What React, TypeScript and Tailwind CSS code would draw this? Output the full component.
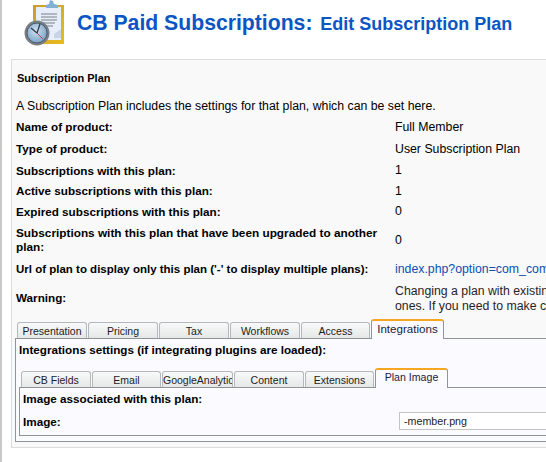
import React from 'react';

const rows: { label: React.ReactNode; value?: React.ReactNode; height: string; labelSize?: string }[] = [
  { label: 'Name of product:', value: 'Full Member', height: 'h-[22px]' },
  { label: 'Type of product:', value: 'User Subscription Plan', height: 'h-[22px]' },
  { label: 'Subscriptions with this plan:', value: '1', height: 'h-[21px]' },
  { label: 'Active subscriptions with this plan:', value: '1', height: 'h-[20px]' },
  { label: 'Expired subscriptions with this plan:', value: '0', height: 'h-[21px]' },
  {
    label: (
      <>
        Subscriptions with this plan that have been upgraded to another
        <br />
        plan:
      </>
    ),
    value: '0',
    height: 'h-[36px]',
    labelSize: 'text-[11.8px]',
  },
  {
    label: "Url of plan to display only this plan ('-' to display multiple plans):",
    value: <span className="text-[#0b4fb5]">index.php?option=com_comprofiler&amp;task=pluginclass</span>,
    height: 'h-[22px]',
    labelSize: 'text-[11.5px]',
  },
];

const mainTabs = [
  { name: 'Presentation', width: 'w-[70px]' },
  { name: 'Pricing', width: 'w-[70px]' },
  { name: 'Tax', width: 'w-[70px]' },
  { name: 'Workflows', width: 'w-[70px]' },
  { name: 'Access', width: 'w-[69px]' },
];

const subTabs = [
  { name: 'CB Fields', width: 'w-[70px]' },
  { name: 'Email', width: 'w-[69px]' },
  { name: 'GoogleAnalytics', width: 'w-[71px]' },
  { name: 'Content', width: 'w-[70px]' },
  { name: 'Extensions', width: 'w-[69px]' },
];

const Tab = ({ name, width }: { name: string; width: string }) => (
  <div
    className={`${width} h-4 shrink-0 overflow-hidden whitespace-nowrap rounded-t-[3px] border border-b-0 border-[#b4b8bc] bg-gradient-to-b from-[#f8f9f9] to-[#e6e8e8] text-center text-[10.5px] leading-[16px] text-[#222]`}
  >
    {name}
  </div>
);

const ActiveTab = ({ name, size }: { name: string; size: string }) => (
  <div
    className={`${size} relative z-10 -mb-px h-[20px] w-[73px] shrink-0 whitespace-nowrap rounded-t-[3px] border-x border-t-2 border-x-[#8f9498] border-t-[#f5a623] bg-[#fafaff] text-center leading-[15px] text-[#1a1a3a]`}
  >
    {name}
  </div>
);

const ClipboardClock = () => (
  <svg width="48" height="46" viewBox="0 0 48 46" className="shrink-0">
    <defs>
      <linearGradient id="board" x1="0" y1="0" x2="1" y2="1">
        <stop offset="0" stopColor="#c99a3a" />
        <stop offset="1" stopColor="#e8bc1e" />
      </linearGradient>
      <radialGradient id="face" cx="0.45" cy="0.4" r="0.7">
        <stop offset="0" stopColor="#cfe0ee" />
        <stop offset="1" stopColor="#6f9ac4" />
      </radialGradient>
    </defs>
    <rect x="9" y="5" width="31" height="39" fill="url(#board)" />
    <path d="M12 7h25v33H12z" fill="#e6eefa" />
    <path d="M30 34l7-5v9h-7z" fill="#c9d4e2" />
    <path d="M22 5l3-1 1-4 3 1 1 3 4 1v3H22z" fill="#7fb0d8" />
    <g stroke="#7b8087" strokeWidth="1">
      <path d="M17 14h16M17 17h16M17 20h16M17 23h14M17 26h12" />
    </g>
    <circle cx="13" cy="33" r="12.5" fill="#7a7f85" />
    <circle cx="13" cy="33" r="10" fill="url(#face)" stroke="#4c5968" strokeWidth="1" />
    <path d="M13 33l-6-5M13 33l3-9" stroke="#2b3542" strokeWidth="1.2" fill="none" />
    <path d="M13 33l6 6" stroke="#b5484a" strokeWidth="1" fill="none" />
  </svg>
);

const App: React.FC = () => {
  return (
    <div className="h-[462px] w-[546px] overflow-hidden border-l-2 border-[#c8c8c8] bg-white font-['Liberation_Sans',Arial,sans-serif] text-[12.3px] text-black">
      <div className="flex h-[59px] items-start pl-[22px]">
        <ClipboardClock />
        <h1 className="ml-[5px] mt-[9px] whitespace-nowrap text-[21.2px] font-bold leading-[28px] text-[#0b55c4]">
          CB Paid Subscriptions: <span className="ml-[2px] text-[18px]">Edit Subscription Plan</span>
        </h1>
      </div>

      <div className="ml-[9px] h-[389px] w-[600px] border border-[#dcdcdc] bg-[#f9f9f9] pl-[3px]">
        <div className="h-[31px] pl-[2px] pt-[11px] text-[11px] font-bold leading-[14px]">Subscription Plan</div>
        <div className="h-[25px] pl-[1px] pt-[7px] leading-[16px]">
          A Subscription Plan includes the settings for that plan, which can be set here.
        </div>
        {rows.map((row, i) => (
          <div key={i} className={`${row.height} flex items-center pl-[1px]`}>
            <div className={`${row.labelSize ?? 'text-[11.7px]'} w-[379px] shrink-0 font-bold leading-[14px]`}>
              {row.label}
            </div>
            <div className="whitespace-nowrap">{row.value}</div>
          </div>
        ))}
        <div className="flex h-[34px] items-start pl-[1px]">
          <div className="w-[379px] shrink-0 pt-[11px] text-[11.7px] font-bold leading-[14px]">Warning:</div>
          <div className="whitespace-nowrap pt-[4px] leading-[15px] text-[#2a1f1f]">
            Changing a plan with existing subscriptions can affect
            <br />
            ones. If you need to make changes to this plan
          </div>
        </div>

        <div className="flex h-[24px] items-end gap-px pl-[2px]">
          {mainTabs.map((t) => (
            <Tab key={t.name} {...t} />
          ))}
          <ActiveTab name="Integrations" size="text-[11.6px]" />
        </div>
        <div className="h-[104px] border border-[#8f9498] bg-[#fafaff] px-[3px]">
          <div className="h-[30px] pt-[4px] text-[11.7px] font-bold leading-[14px]">
            Integrations settings (if integrating plugins are loaded):
          </div>
          <div className="flex h-[18px] items-end gap-px pl-[2px]">
            {subTabs.map((t) => (
              <Tab key={t.name} {...t} />
            ))}
            <ActiveTab name="Plan Image" size="text-[10.6px]" />
          </div>
          <div className="h-[49px] border border-[#8f9498] bg-[#fafaff] px-[3px]">
            <div className="h-[24px] pt-[4px] text-[11.7px] font-bold leading-[14px]">
              Image associated with this plan:
            </div>
            <div className="flex h-[18px] items-center">
              <div className="w-[376px] shrink-0 pt-[1px] text-[11.7px] font-bold">Image:</div>
              <div className="h-[18px] flex-1 border border-[#c4c4c4] bg-white pl-[4px] text-[10.7px] leading-[16px] text-[#222]">
                -member.png
              </div>
            </div>
          </div>
        </div>
      </div>
    </div>
  );
};

export default App;
